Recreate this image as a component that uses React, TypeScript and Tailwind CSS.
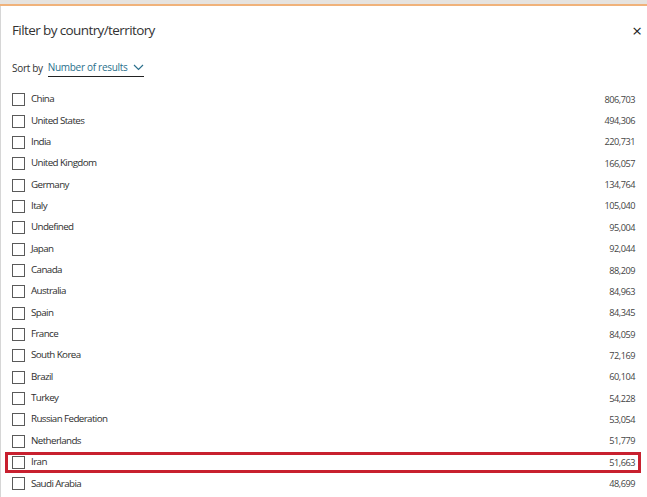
const rows: [string, string][] = [
  ['China', '806,703'],
  ['United States', '494,306'],
  ['India', '220,731'],
  ['United Kingdom', '166,057'],
  ['Germany', '134,764'],
  ['Italy', '105,040'],
  ['Undefined', '95,004'],
  ['Japan', '92,044'],
  ['Canada', '88,209'],
  ['Australia', '84,963'],
  ['Spain', '84,345'],
  ['France', '84,059'],
  ['South Korea', '72,169'],
  ['Brazil', '60,104'],
  ['Turkey', '54,228'],
  ['Russian Federation', '53,054'],
  ['Netherlands', '51,779'],
  ['Iran', '51,663'],
  ['Saudi Arabia', '48,699'],
]

export default function App() {
  return (
    <div className="h-[497px] w-[647px] overflow-hidden bg-white font-['Open_Sans',sans-serif] text-[#333]">
      <div className="h-[4px] bg-[#e6e3df]" />
      <div className="h-[2px] bg-[#f0b27a]" />
      <div className="flex h-[491px] flex-col border-l border-[#d6d6d6]">
        <div className="flex items-center justify-between pl-[11px] pr-[5px] pt-[13px]">
          <h2 className="text-[13.5px] leading-[22px] tracking-[-0.6px] text-[#333]">Filter by country/territory</h2>
          <span className="text-[17px] leading-none text-[#222]">×</span>
        </div>
        <div className="flex items-center pl-[11px] pt-[19px] text-[10px] tracking-[-0.3px]">
          <span className="text-[#333]">Sort by</span>
          <span className="ml-[5px] flex items-center gap-[6px] border-b border-[#222] pb-[1px] text-[#2a6f8c]">
            Number of results
            <svg width="11" height="7" viewBox="0 0 11 7" fill="none" stroke="#2a6f8c" strokeWidth="1.2">
              <path d="M1 1l4.5 4.5L10 1" />
            </svg>
          </span>
        </div>
        <ul className="mt-[12px] flex flex-col pr-[10px]">
          {rows.map(([name, count]) => {
            const hl = name === 'Iran'
            return (
              <li
                key={name}
                className={
                  hl
                    ? 'ml-[4px] mr-[-4px] flex h-[21.35px] items-center border-[3px] border-[#c8202f] pl-[4px] pr-[3px]'
                    : 'ml-[4px] mr-[-4px] flex h-[21.35px] items-center border-[3px] border-transparent pl-[4px] pr-[3px]'
                }
              >
                <span className="h-[13px] w-[13px] shrink-0 border border-[#5a5a5a]" />
                <span className="ml-[6px] flex-1 text-[9.8px] tracking-[-0.6px] text-[#2e2e2e]">{name}</span>
                <span className="text-[9.2px] tracking-[-0.5px] text-[#444]">{count}</span>
              </li>
            )
          })}
        </ul>
      </div>
    </div>
  )
}
